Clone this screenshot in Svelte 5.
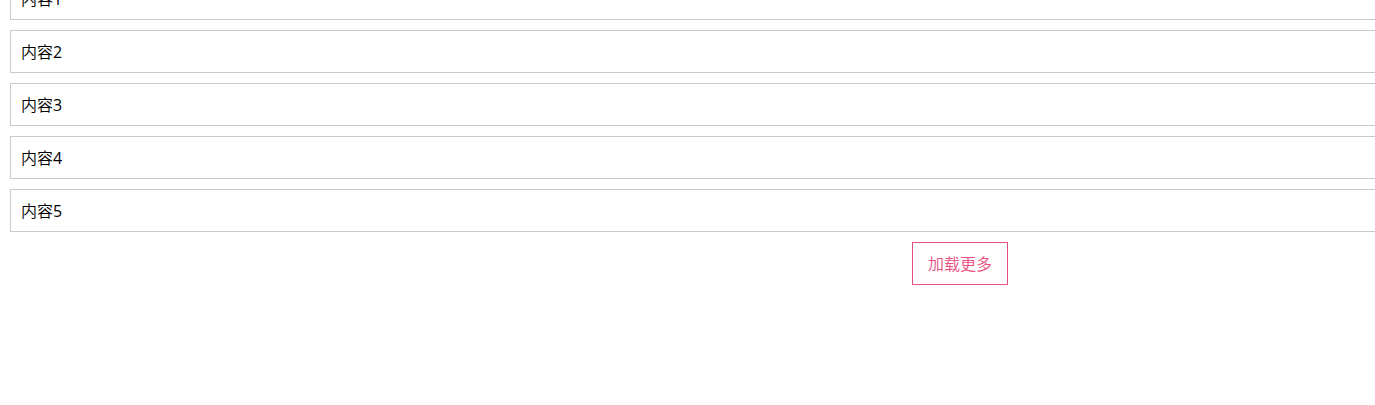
<script>
  const items = [1, 2, 3, 4, 5];
</script>

<div class="viewport">
  <main>
    <ul>
      {#each items as n}
        <li>内容{n}</li>
      {/each}
    </ul>
    <button type="button">加载更多</button>
  </main>
</div>

<style>
  :global(body) {
    margin: 0;
    background: #fff;
  }
  .viewport {
    display: flex;
    overflow: hidden;
    font: 16px/21px "Open Sans", "Noto Sans CJK SC DemiLight", "Noto Sans CJK SC", sans-serif;
    color: #000;
  }
  main {
    flex: 1 0 auto;
    box-sizing: border-box;
    min-width: 1920px;
    margin-top: -33px;
    padding: 10px;
    display: flex;
    flex-direction: column;
    align-items: center;
    gap: 10px;
  }
  ul {
    align-self: stretch;
    margin: 0;
    padding: 0;
    list-style: none;
    display: flex;
    flex-direction: column;
    gap: 10px;
  }
  li {
    padding: 11px 10px 9px;
    border: 1px solid #c9c9c9;
  }
  button {
    padding: 11px 15px 9px;
    border: 1px solid #e8507f;
    background: #fff;
    color: #e8507f;
    font: inherit;
    font-weight: 350;
    cursor: pointer;
  }
</style>
